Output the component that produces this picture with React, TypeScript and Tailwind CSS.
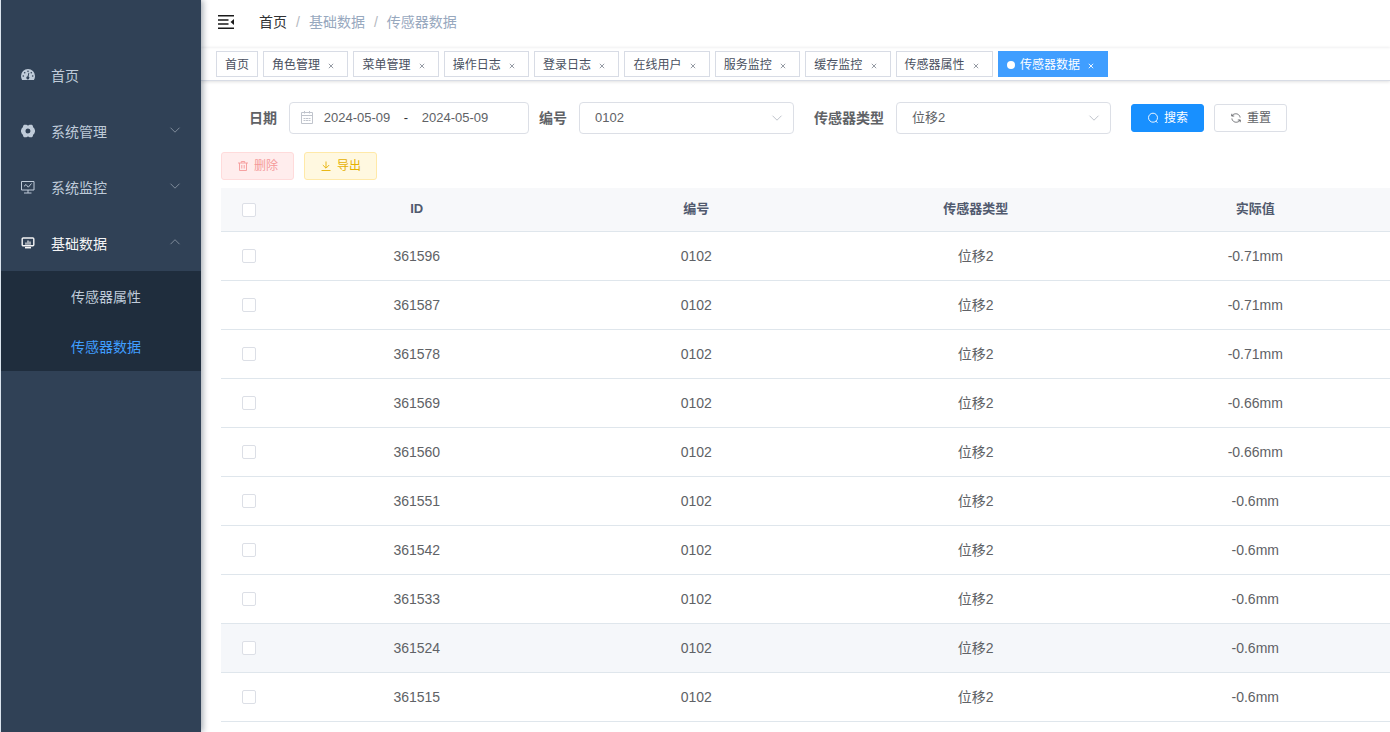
import { ReactNode, useState } from "react"

const tabs = ["角色管理", "菜单管理", "操作日志", "登录日志", "在线用户", "服务监控", "缓存监控", "传感器属性"]

const rows = [
  { id: 361596, code: "0102", type: "位移2", value: "-0.71mm" },
  { id: 361587, code: "0102", type: "位移2", value: "-0.71mm" },
  { id: 361578, code: "0102", type: "位移2", value: "-0.71mm" },
  { id: 361569, code: "0102", type: "位移2", value: "-0.66mm" },
  { id: 361560, code: "0102", type: "位移2", value: "-0.66mm" },
  { id: 361551, code: "0102", type: "位移2", value: "-0.6mm" },
  { id: 361542, code: "0102", type: "位移2", value: "-0.6mm" },
  { id: 361533, code: "0102", type: "位移2", value: "-0.6mm" },
  { id: 361524, code: "0102", type: "位移2", value: "-0.6mm" },
  { id: 361515, code: "0102", type: "位移2", value: "-0.6mm" },
]

function DashboardIcon() {
  return (
    <svg viewBox="0 0 14 14" className="size-3.5">
      <path fill="currentColor" d="M7 1a7 7 0 0 0-7 7c0 1.500.4 2.800 1.100 4h11.800A7.500 7.500 0 0 0 14 8a7 7 0 0 0-7-7z" />
      <g fill="#304156">
        <circle cx="2.300" cy="8" r="0.800" />
        <circle cx="3.700" cy="4.700" r="0.800" />
        <circle cx="7" cy="3.200" r="0.800" />
        <circle cx="10.300" cy="4.700" r="0.800" />
        <circle cx="11.700" cy="8" r="0.800" />
        <path d="M7.500 4.800l.8.200-.7 3.500a1.500 1.500 0 1 1-1-.2z" />
      </g>
    </svg>
  )
}

function GearIcon() {
  return (
    <svg viewBox="0 0 14 14" className="size-3.5" fill="currentColor" fillRule="evenodd">
      <path d="M3.200.8h2.300q1.500 1.300 3 0h2.300l.9.600q.1 2 1.500 2.800L14 6.300v1.400l-.8 2.100q-1.400.8-1.500 2.800l-.9.600H8.500q-1.500-1.300-3 0H3.200l-.9-.6Q2.200 10.600.8 9.800L0 7.700V6.300l.8-2.100Q2.200 3.400 2.300 1.400zM7 4.500a2.500 2.500 0 1 0 0 5 2.500 2.500 0 0 0 0-5z" />
    </svg>
  )
}

function MonitorIcon() {
  return (
    <svg viewBox="0 0 14 14" className="size-3.5" fill="none" stroke="currentColor">
      <path d="M.5 1.500h12.500v8.500H.5zM7 10v3M3 13h7.500M3 6.300l2-1.800 2.300 2.700L10.500 3.500" />
    </svg>
  )
}

function DataIcon() {
  return (
    <svg viewBox="0 0 14 14" className="size-3.5" fill="none" stroke="currentColor">
      <rect x="1.200" y="2" width="11.600" height="7.800" rx="1" strokeWidth="1.400" />
      <path d="M5 8.800V6.500M7 8.800V4.500M9 8.800V5.500" strokeWidth="1.200" />
      <path d="M4 11.700h6" strokeWidth="1.500" />
    </svg>
  )
}

function Chevron({ up, className }: { up?: boolean; className: string }) {
  return (
    <svg viewBox="0 0 12 12" className={className} fill="none" stroke="currentColor">
      <path d={up ? "M1.500 8.200L6 3.700l4.500 4.500" : "M1.500 3.700L6 8.200l4.500-4.500"} />
    </svg>
  )
}

function CalendarIcon() {
  return (
    <svg viewBox="0 0 14 14" className="size-3.5 shrink-0 text-[#c0c4cc]" fill="none" stroke="currentColor">
      <path d="M1.500 1.500h11v11h-11zM1.500 4.500h11M4.500 0v2.500M9.500 0v2.500" />
      <path d="M3.500 7.500h7M3.500 9.500h7" strokeDasharray="2 .5" />
    </svg>
  )
}

function SmallIcon({ children }: { children: ReactNode }) {
  return (
    <svg viewBox="0 0 12 12" className="size-3" fill="none" stroke="currentColor" strokeWidth="0.900">
      {children}
    </svg>
  )
}

type MenuItemProps = { icon: ReactNode; label: string; arrow?: "up" | "down"; active?: boolean }

function MenuItem({ icon, label, arrow, active }: MenuItemProps) {
  const content = (
    <>
      {icon}
      <span className="ml-4 flex-1 pt-0.5 text-left">{label}</span>
      {arrow && <Chevron up={arrow === "up"} className="mb-0.5 size-3 text-[#7f8b9a]" />}
    </>
  )
  const style = `flex h-14 w-full items-center px-5 ${active ? "text-[#f4f4f5]" : "text-[#bfcbd9]"}`

  return (
    <li>
      {arrow
        ? <button type="button" aria-expanded={arrow === "up"} className={style}>{content}</button>
        : <a href="#" className={style}>{content}</a>}
    </li>
  )
}

function Sidebar() {
  return (
    <aside className="z-10 w-[201px] shrink-0 border-l border-[#dbe4ed] bg-[#304156] pt-[47px] shadow-[2px_0_6px_rgba(0,21,41,0.35)]">
      <ul>
        <MenuItem icon={<DashboardIcon />} label="首页" />
        <MenuItem icon={<GearIcon />} label="系统管理" arrow="down" />
        <MenuItem icon={<MonitorIcon />} label="系统监控" arrow="down" />
        <MenuItem icon={<DataIcon />} label="基础数据" arrow="up" active />
      </ul>
      <ul className="bg-[#1f2d3d]">
        <li><a href="#" className="flex h-[50px] items-center pt-0.5 pl-[70px] text-[#bfcbd9]">传感器属性</a></li>
        <li><a href="#" className="flex h-[50px] items-center pt-0.5 pl-[70px] text-[#409eff]">传感器数据</a></li>
      </ul>
    </aside>
  )
}

function Navbar() {
  return (
    <header className="flex h-[47px] items-center pb-1 pl-[17px] shadow-[0_1px_2px_rgba(0,21,41,0.06)]">
      <button type="button" aria-label="收起菜单">
        <svg viewBox="0 0 16 14" className="h-3.5 w-4" fill="none" stroke="#1a1a1a" strokeWidth="1.500">
          <path d="M0 .8h16M0 5h10.500M0 9h10.500M0 13.200h16" />
          <path d="M16 4v6l-3.500-3z" fill="#1a1a1a" stroke="none" />
        </svg>
      </button>
      <nav className="ml-[25px] flex gap-[9px] text-[#97a8be]">
        <a href="#" className="text-[#303133]">首页</a>
        <span className="text-[#b4b8c0]">/</span>
        <span>基础数据</span>
        <span className="text-[#b4b8c0]">/</span>
        <span>传感器数据</span>
      </nav>
    </header>
  )
}

function CloseButton() {
  return (
    <button type="button" aria-label="关闭" className="inline-flex size-4 items-center justify-center align-middle">
      <svg viewBox="0 0 6 6" className="size-1.5" fill="none" stroke="currentColor">
        <path d="M.8.8l4.400 4.400M5.200.8L.8 5.200" strokeWidth="0.900" />
      </svg>
    </button>
  )
}

function TagsView() {
  return (
    <div className="flex h-[34px] gap-[5px] border-b border-[#d8dce5] pt-1 pl-[15px] text-xs leading-[26px] whitespace-nowrap text-[#495060] shadow-[0_1px_3px_rgba(0,0,0,0.12)]">
      <div className="h-[26px] border border-[#d8dce5] px-2"><a href="#">首页</a></div>
      {tabs.map((tab) => (
        <div key={tab} className="h-[26px] border border-[#d8dce5] px-2">
          <a href="#">{tab}</a>{" "}
          <span className="text-[#8a909a]"><CloseButton /></span>
        </div>
      ))}
      <div className="h-[26px] border border-[#409eff] bg-[#409eff] px-2 text-white">
        <span className="mr-[5px] inline-block size-2 rounded-full bg-white"></span>
        <a href="#">传感器数据</a>{" "}
        <CloseButton />
      </div>
    </div>
  )
}

type SelectProps = { id: string; label: string; options: string[] }

function SelectField({ id, label, options }: SelectProps) {
  return (
    <div className="flex items-center gap-3">
      <label htmlFor={id} className="font-bold text-[#606266]">{label}</label>
      <div className="relative">
        <select id={id} className="h-8 w-[215px] appearance-none rounded border border-[#dcdfe6] bg-white pr-8 pl-[15px] text-[13px] text-[#606266]">
          {options.map((option) => <option key={option}>{option}</option>)}
        </select>
        <Chevron className="pointer-events-none absolute top-2.5 right-[11px] size-3 text-[#c0c4cc]" />
      </div>
    </div>
  )
}

function SearchForm() {
  const [start, setStart] = useState("2024-05-09")
  const [end, setEnd] = useState("2024-05-09")

  return (
    <form className="flex items-center pl-7">
      <label htmlFor="start" className="mr-3 font-bold text-[#606266]">日期</label>
      <div className="mr-2.5 flex h-8 w-60 items-center rounded border border-[#dcdfe6] px-2.5 text-[13px] text-[#606266]">
        <CalendarIcon />
        <input id="start" type="text" value={start} onChange={(e) => setStart(e.target.value)}
          className="w-[86px] text-center outline-none"
        />
        <span className="w-3 text-center text-[#303133]">-</span>
        <input type="text" aria-label="结束日期" value={end} onChange={(e) => setEnd(e.target.value)}
          className="w-[86px] text-center outline-none"
        />
      </div>
      <SelectField id="code" label="编号" options={["0102"]} />
      <div className="w-5"></div>
      <SelectField id="type" label="传感器类型" options={["位移2"]} />
      <div className="ml-5 flex gap-2.5 text-xs">
        <button type="button" className="flex h-7 items-center gap-[5px] rounded-[3px] border border-[#1890ff] bg-[#1890ff] px-[15px] text-white">
          <SmallIcon>
            <circle cx="6" cy="5.700" r="4.500" />
            <path d="M8.800 9l1.700 1.800" />
          </SmallIcon>
          搜索
        </button>
        <button type="button" className="flex h-7 items-center gap-[5px] rounded-[3px] border border-[#dcdfe6] bg-white px-[15px] text-[#606266]">
          <SmallIcon>
            <path d="M1.800 4.200V1.800M1.800 4h2.400M1.900 3.900C3.500 1.300 7.500 1 9.300 3.500q.7 1 .8 2M10.200 7.800v2.400M10.200 8H7.800M10.100 8.100C8.500 10.700 4.500 11 2.700 8.500q-.7-1-.8-2" />
          </SmallIcon>
          重置
        </button>
      </div>
    </form>
  )
}

function Checkbox({ label }: { label: string }) {
  return (
    <input type="checkbox" aria-label={label}
      className="block mx-auto size-3.5 appearance-none rounded-xs border border-[#dcdfe6] bg-white checked:bg-[#1890ff]"
    />
  )
}

function DataTable() {
  return (
    <div className="mt-2 overflow-hidden">
      <table className="w-[calc(100%+5px)] table-fixed border-separate border-spacing-0 text-center text-[#606266]">
        <thead className="bg-[#f7f8fa] text-[13px] text-[#515a6e]">
          <tr className="h-11 *:border-b *:border-[#dfe6ec]">
            <th className="w-14"><Checkbox label="全选" /></th>
            <th>ID</th>
            <th>编号</th>
            <th>传感器类型</th>
            <th>实际值</th>
          </tr>
        </thead>
        <tbody>
          {rows.map((row) => (
            <tr key={row.id} className={`h-[49px] *:border-b *:border-[#dfe6ec] ${row.id === 361524 ? "bg-[#f5f7fa]" : ""}`}>
              <td><Checkbox label={`选择 ${row.id}`} /></td>
              <td>{row.id}</td>
              <td>{row.code}</td>
              <td>{row.type}</td>
              <td>{row.value}</td>
            </tr>
          ))}
        </tbody>
      </table>
    </div>
  )
}

function App() {
  return (
    <div className="flex min-h-screen bg-white font-['Liberation_Sans','Noto_Sans_CJK_SC',sans-serif] text-sm">
      <Sidebar />
      <div className="min-w-0 flex-1">
        <Navbar />
        <TagsView />
        <main className="pt-[21px] pl-5">
          <SearchForm />
          <div className="mt-[18px] flex gap-2.5 text-xs">
            <button type="button" className="flex h-7 items-center gap-[5px] rounded-[3px] border border-[#ffdbdb] bg-[#ffeded] px-[15px] text-[#f59a9a]">
              <SmallIcon>
                <path d="M1 3h10M4.300 2.800V1.500h3.400v1.300M2.500 3v7.500h7V3M4.800 5v3.500M7.200 5v3.500" />
              </SmallIcon>
              删除
            </button>
            <button type="button" className="flex h-7 items-center gap-[5px] rounded-[3px] border border-[#ffe9a8] bg-[#fff8e0] px-[15px] text-[#e6b000]">
              <SmallIcon>
                <path d="M6 1.500v6.500M2.800 5L6 8.200 9.200 5M1.500 10.500h9" />
              </SmallIcon>
              导出
            </button>
          </div>
          <DataTable />
        </main>
      </div>
    </div>
  )
}

export default App
